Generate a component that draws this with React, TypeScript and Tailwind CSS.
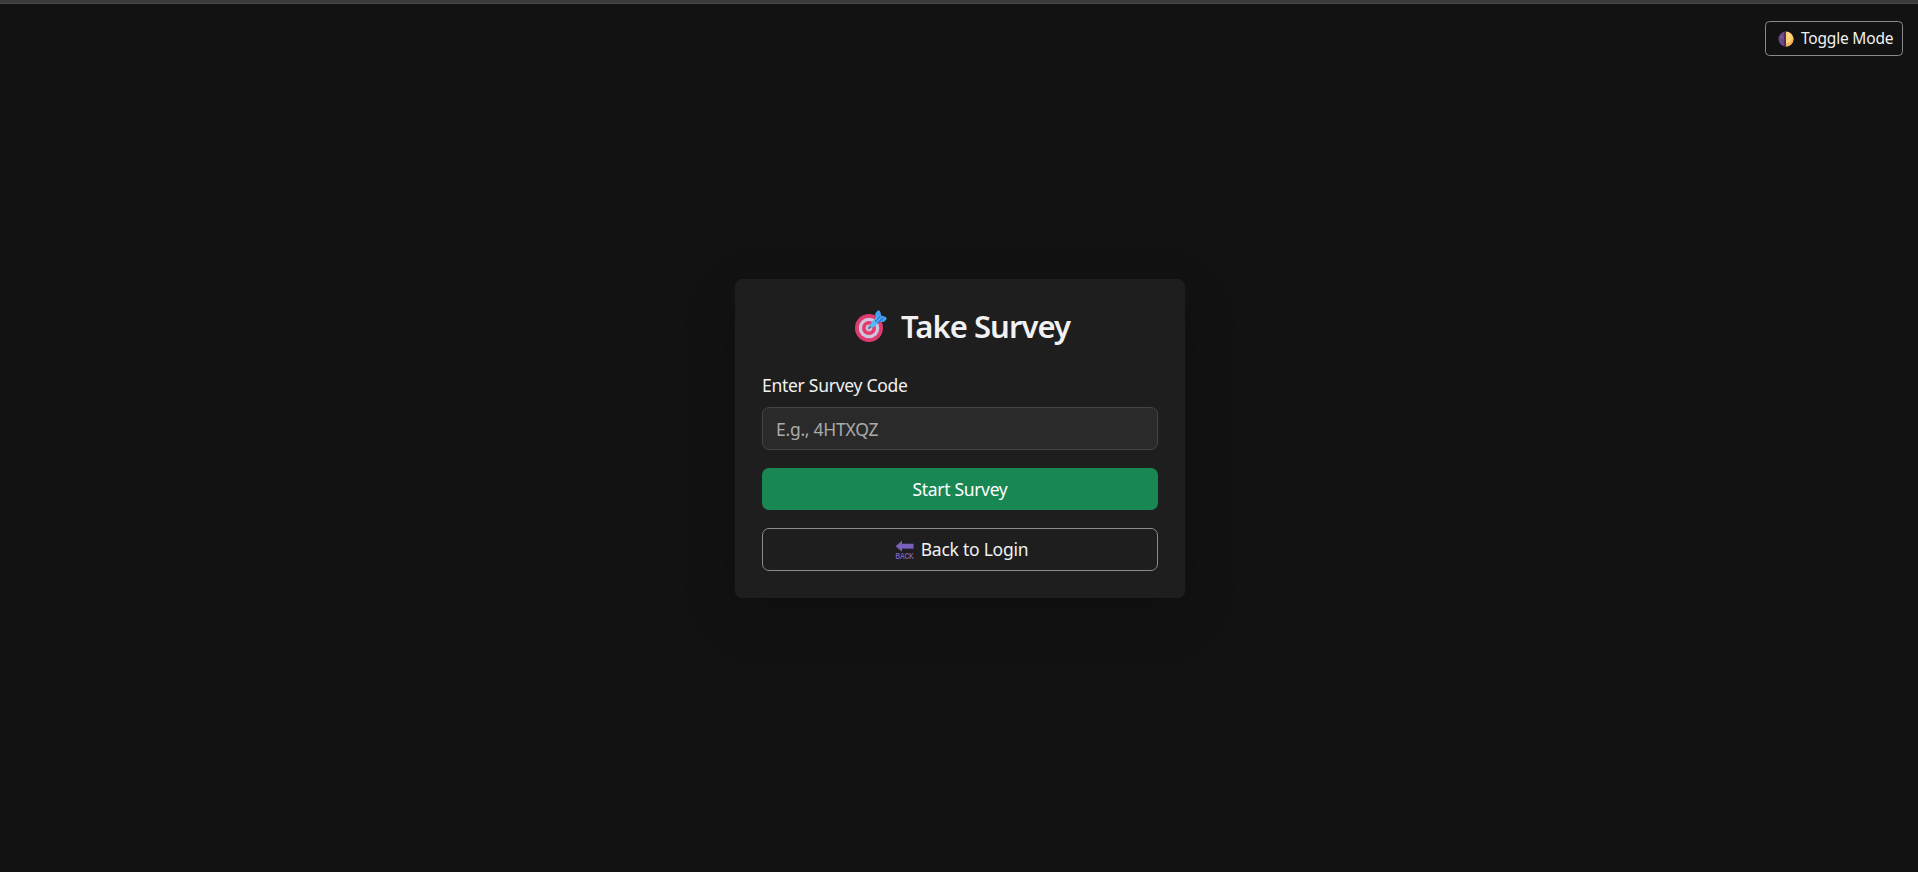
import React from "react";

function HalfMoonIcon() {
  return (
    <svg viewBox="0 0 32 32" className="h-4 w-4 shrink-0" aria-hidden="true">
      <path d="M16 1a15 15 0 0 0 0 30Z" fill="#68488a" />
      <path d="M16 1a15 15 0 0 1 0 30Z" fill="#ffcf70" />
      <path d="M16 25c6-1 11-5 14.500-12A15 15 0 0 1 16 31Z" fill="#f8b15d" />
      <path d="M12 2v29l4 0V1Z" fill="#4b3160" />
      <circle cx="7" cy="12" r="3" fill="#7b579f" />
      <circle cx="22" cy="9" r="2" fill="#ffe29a" />
      <circle cx="21" cy="21" r="2.500" fill="#ffdc8c" />
    </svg>
  );
}

function TargetIcon() {
  return (
    <svg viewBox="0 0 32 32" className="h-8 w-8 shrink-0" aria-hidden="true">
      <circle cx="14" cy="18" r="14" fill="#dd3c6e" />
      <circle cx="14" cy="18" r="10.300" fill="#cfc4df" />
      <circle cx="14" cy="18" r="7" fill="#e83a6a" />
      <circle cx="14" cy="18" r="3.400" fill="#c9bdd7" />
      <path d="M14 18l4-4" stroke="#65708c" strokeWidth="2" strokeLinecap="round" />
      <path d="M16 17.500c-1-2-.5-4 1-5.500l3.500-4-.3-4.500L23 .3l2 .8 1.300 4.400 4.700 1.500.7 2.200-3 2.800-4.700-.3-3.500 3.800c-1.200 1.500-3 2.300-4.500 2Z" fill="#459ff0" />
      <path d="M16 17.500c-1-2-.5-4 1-5.500l6-6 3 3-5.500 6.500c-1.200 1.500-3 2.300-4.500 2Z" fill="#58b9f5" />
      <path d="m20.500 11.500 4.500-5M22.500 13l5-4.500" stroke="#2778d6" strokeWidth="1.200" strokeLinecap="round" />
    </svg>
  );
}

function BackIcon() {
  return (
    <svg viewBox="0 0 19 19" className="h-[19px] w-[19px] shrink-0 overflow-visible" aria-hidden="true">
      <path d="M.5 6.300 7 .8v3h11.500v5H7v3Z" fill="#7960b8" />
      <path d="M7 8h11.500v.9H7Z" fill="#5c3f9d" />
      <text x="0.500" y="18.500" textLength="18" lengthAdjust="spacingAndGlyphs" fill="#7960b8" fontFamily="Liberation Sans, sans-serif" fontSize="8.500" fontWeight="700">
        BACK
      </text>
    </svg>
  );
}

export default function App() {
  return (
    <div className="flex h-screen flex-col overflow-hidden bg-[#121212] font-['Noto_Sans',sans-serif] text-[#f1f1f1]">
      <div className="h-1 shrink-0 border-b border-[#474747] bg-[#3c3c3c]" />
      <header className="flex shrink-0 justify-end pt-[17px] pr-[15px]">
        <button className="flex h-[35px] w-[138px] items-center gap-[7px] rounded-[4.500px] border border-[#8a8a8a] pl-3 text-[15.5px] tracking-[-0.2px] whitespace-nowrap">
          <HalfMoonIcon />
          Toggle Mode
        </button>
      </header>
      <main className="flex justify-center pl-[2px] pt-[223px]">
        <section className="flex h-[319px] w-[450px] flex-col rounded-[7px] bg-[#1e1e1e] px-[27px] shadow-[0_18px_54px_rgba(0,0,0,0.175)]">
          <h1 className="mt-[27px] flex h-10 items-center justify-center gap-[14px] pl-[5px] text-[31px] font-semibold tracking-[-0.95px] whitespace-nowrap">
            <TargetIcon />
            Take Survey
          </h1>
          <label htmlFor="code" className="mt-[25px] h-7 text-[17.5px] leading-7 tracking-[-0.28px]">
            Enter Survey Code
          </label>
          <input
            id="code"
            placeholder="E.g., 4HTXQZ"
            className="mt-2 h-[43px] w-full rounded-[7px] border border-[#444] bg-[#2a2a2a] px-[13px] text-[17.5px] tracking-[-0.25px] outline-none placeholder:text-[#aaa]"
          />
          <button className="mt-[18px] h-[42px] w-full rounded-[7px] bg-[#198754] text-[17.5px] tracking-[-0.33px] text-white">
            Start Survey
          </button>
          <button className="mt-[18px] flex h-[43px] w-full items-center justify-center gap-[7px] rounded-[7px] border border-[#8a8a8a] pl-[3px] text-[17.5px] tracking-[-0.25px]">
            <BackIcon />
            Back to Login
          </button>
        </section>
      </main>
    </div>
  );
}
